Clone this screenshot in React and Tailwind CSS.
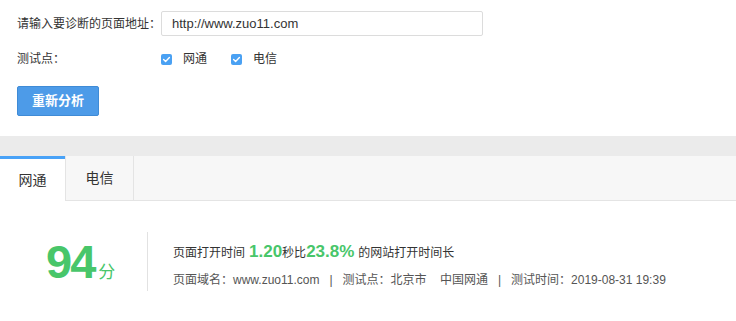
import React from "react";

function CheckIcon() {
    return (
        <svg width="11" height="11" viewBox="0 0 11 11" className="shrink-0">
            <rect x="0" y="0" width="11" height="11" rx="2" fill="#4aa1f3" />
            <path d="M2.6 5.6 L4.6 7.5 L8.4 3.6" stroke="#fff" strokeWidth="1.4" fill="none" strokeLinecap="round" strokeLinejoin="round" />
        </svg>
    );
}

function App() {
    const font = "font-['Liberation_Sans','Noto_Sans_CJK_SC',sans-serif]";

    return (
        <div className={`w-[736px] h-[321px] bg-white text-[#333] ${font}`}>
            <div className="px-[17px] pt-[11px] pb-[20px]">
                <div className="flex items-center h-[25px]">
                    <span className="w-[144px] text-[12px] leading-none">请输入要诊断的页面地址：</span>
                    <div className="w-[322px] h-[25px] border border-[#dcdcdc] rounded-[2px] flex items-center pl-[10px] text-[13px] text-[#333]">
                        http://www.zuo11.com
                    </div>
                </div>
                <div className="flex items-center h-[20px] mt-[13px] text-[12px]">
                    <span className="w-[144px]">测试点：</span>
                    <label className="flex items-center">
                        <CheckIcon />
                        <span className="ml-[11px]">网通</span>
                    </label>
                    <label className="flex items-center ml-[24px]">
                        <CheckIcon />
                        <span className="ml-[11px]">电信</span>
                    </label>
                </div>
                <button className="mt-[17px] w-[82px] h-[30px] bg-[#4d9be8] border border-[#3f8bd6] rounded-[2px] text-white text-[13px] font-bold">
                    重新分析
                </button>
            </div>

            <div className="h-[20px] bg-[#ebebeb]" />

            <div className="flex h-[45px] bg-[#f7f7f7] text-[14px]">
                <div className="w-[65px] bg-white border-t-[3px] border-[#49a2f7] flex items-center justify-center">网通</div>
                <div className="w-[69px] border-l border-r border-b border-[#e4e4e4] flex items-center justify-center">电信</div>
                <div className="flex-1 border-b border-[#e4e4e4]" />
            </div>

            <div className="flex items-center mt-[31px]">
                <div className="w-[147px] pl-[46px] flex items-baseline text-[#48c66a]">
                    <span className="text-[47px] font-bold leading-none tracking-[-2px]">94</span>
                    <span className="text-[17px] leading-none ml-[4px]">分</span>
                </div>
                <div className="w-px h-[59px] bg-[#e2e2e2]" />
                <div className="pl-[25px] pt-[9px] text-[12px]">
                    <div className="flex items-baseline h-[20px] leading-none">
                        <span>页面打开时间</span>
                        <span className="ml-[4px] text-[17px] font-bold text-[#48c66a]">1.20</span>
                        <span>秒比</span>
                        <span className="text-[17px] font-bold text-[#48c66a]">23.8%</span>
                        <span className="ml-[4px]">的网站打开时间长</span>
                    </div>
                    <div className="mt-[7px] text-[#555] leading-[20px] whitespace-pre">
                        页面域名：www.zuo11.com   |   测试点：北京市    中国网通   |   测试时间：2019-08-31 19:39
                    </div>
                </div>
            </div>
        </div>
    );
}

export default App;
